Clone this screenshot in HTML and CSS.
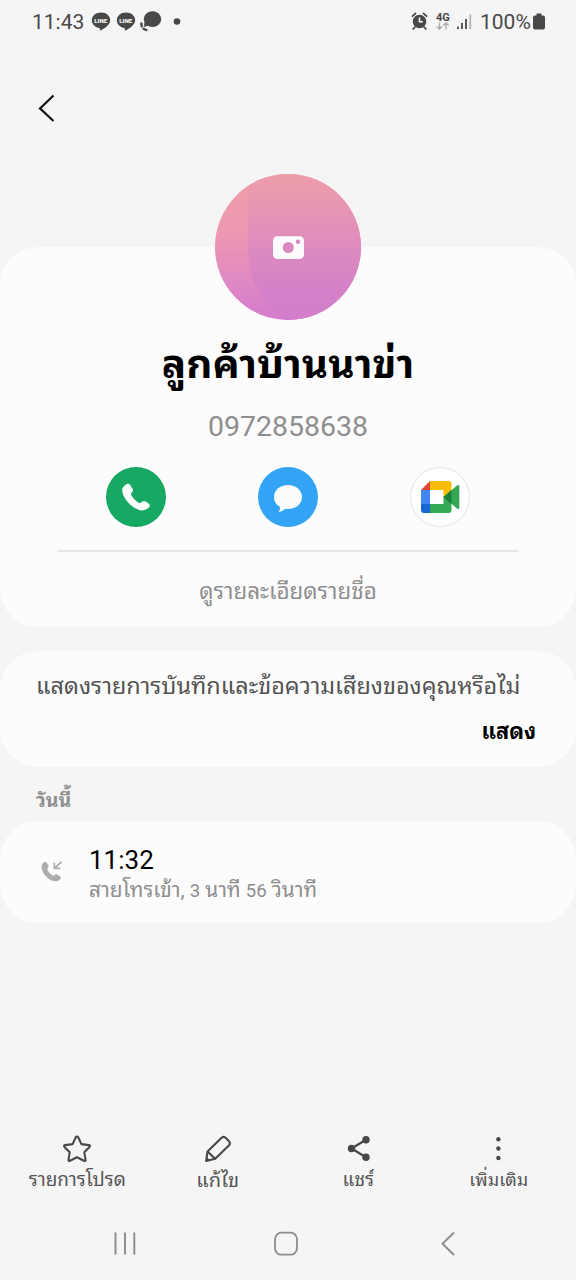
FILE: index.html
```html
<!DOCTYPE html>
<html lang="th">
<head>
<meta charset="utf-8">
<title>ลูกค้าบ้านนาข่า</title>
<link rel="stylesheet" href="styles.css">
</head>
<body>
<div class="screen">
  <header class="status">
    <span class="clock">11:43</span>
    <svg class="notices" width="94" height="26" viewBox="0 0 94 26">
      <g fill="#484848">
        <path d="M10 3.500C4.700 3.500.8 7 .8 11.300c0 3.900 3.200 7.100 7.600 7.800.8.200.4 1.600.6 2.600 3.500-1.600 10.200-5.600 10.200-10.400C19.200 7 15.300 3.500 10 3.500z"/>
        <path transform="translate(25 0)" d="M10 3.500C4.700 3.500.8 7 .8 11.300c0 3.900 3.200 7.100 7.600 7.800.8.200.4 1.600.6 2.600 3.500-1.600 10.200-5.600 10.200-10.400C19.200 7 15.300 3.500 10 3.500z"/>
        <ellipse cx="61.500" cy="10.200" rx="8.700" ry="7.900"/>
        <path d="M53.500 13l-.5 5 6-2z"/>
        <circle cx="86" cy="12.500" r="3.300"/>
      </g>
      <path d="M50.500 13.500c-1 4.500 2 7.500 7 8" fill="none" stroke="#484848" stroke-width="2.400" stroke-dasharray="5 1"/>
      <text class="line-mark" x="3.200" y="13.700">LINE</text>
      <text class="line-mark" x="28.200" y="13.700">LINE</text>
    </svg>
    <svg class="signals" width="62" height="26" viewBox="0 0 62 26">
      <g fill="none" stroke="#484848" stroke-width="1.800" stroke-linecap="round">
        <path d="M1.500 7.200l3-2.800M15.500 7.200l-3-2.800M3.700 18.300l-1.500 1.500M13.300 18.300l1.500 1.500"/>
      </g>
      <circle cx="8.500" cy="12.500" r="6.800" fill="#484848"/>
      <path d="M8.500 8.500v4.300h3.400" fill="none" stroke="#f5f5f5" stroke-width="1.600"/>
      <text class="network" x="25" y="11.500">4G</text>
      <path d="M28.500 13.500v6.500m-2.600-2.500l2.600 2.600 2.600-2.600M35 20.500V14m-2.600 2.500L35 13.900l2.600 2.600" fill="none" stroke="#aaa" stroke-width="1.300"/>
      <path d="M47 17.500V20M51 14v6M55 10v10" stroke="#484848" stroke-width="1.800"/>
      <path d="M59.300 5.500V20" stroke="#b3b3b3" stroke-width="1.800"/>
    </svg>
    <span class="charge">100%</span>
    <svg width="12" height="18" viewBox="0 0 12 18"><path d="M3.500.5h5v2H10q2 0 2 2v10q0 2-2 2H2q-2 0-2-2v-10q0-2 2-2h1.500z" fill="#484848"/></svg>
  </header>

  <nav class="top">
    <svg width="18" height="30" viewBox="0 0 18 30"><path d="M16.500 2.500L3 15.400l13.500 12.600" fill="none" stroke="#111" stroke-width="2.200"/></svg>
  </nav>

  <section class="card profile">
    <svg class="avatar" width="146" height="146" viewBox="0 0 146 146">
      <defs>
        <linearGradient id="base" x1="0" y1="0" x2="0" y2="1"><stop offset="0" stop-color="#f09ea9"/><stop offset=".4" stop-color="#ed98b2"/><stop offset="1" stop-color="#d57ccf"/></linearGradient>
        <linearGradient id="shade" x1="0" y1="0" x2="0" y2="1"><stop offset="0" stop-color="#ee9daa"/><stop offset=".45" stop-color="#e08dbc"/><stop offset=".75" stop-color="#d582c8"/><stop offset="1" stop-color="#d47dcc"/></linearGradient>
        <clipPath id="round"><circle cx="73" cy="73" r="73"/></clipPath>
      </defs>
      <g clip-path="url(#round)">
        <rect width="146" height="146" fill="url(#base)"/>
        <path d="M33 0h113v146H70C44 125 33 104 33 74z" fill="url(#shade)"/>
      </g>
      <rect x="58" y="62.300" width="31" height="22.700" rx="4.500" fill="#fdfbfd"/>
      <circle cx="73.300" cy="73.500" r="5.500" fill="#da88bf"/>
      <circle cx="83" cy="67.800" r="2.200" fill="#da88bf"/>
    </svg>
    <h1 class="name">ลูกค้าบ้านนาข่า</h1>
    <div class="phone">0972858638</div>
    <div class="actions">
      <svg width="60" height="60" viewBox="0 0 60 60">
        <circle cx="30" cy="30" r="30" fill="#17a864"/>
        <path d="M20.500 17.200c1.500-.9 3-.3 4 1.200l2 3.300c.8 1.500.4 2.800-.8 4-1 1-.8 2 .2 3.500 1.700 2.500 4 4.800 6.400 6.300 1.400.8 2.300.7 3.200-.2 1.300-1.400 2.600-1.800 4.200-.8l3 2c1.400 1 1.500 2.700.2 3.900-3 3-7 4-11 2.200C24.500 39.300 17.800 32 16.400 25.200c-.7-3.500.6-6.300 4.100-8z" fill="#fbfffc"/>
      </svg>
      <svg width="60" height="60" viewBox="0 0 60 60">
        <circle cx="30" cy="30" r="30" fill="#33a4f5"/>
        <path d="M30 18c8 0 14 5 14 12s-6 12-14 12c-1 0-2-.1-3-.3-1.600 1.700-3.500 2.800-5.600 3.300-.6 0-.7-.4-.4-.8.800-1 1.200-2.300.9-4.400C18 37.700 16 34.200 16 30c0-7 6-12 14-12z" fill="#fafcfe"/>
      </svg>
      <svg width="60" height="60" viewBox="0 0 60 60">
        <circle cx="30" cy="30" r="29.500" fill="#fff" stroke="#e3e3e8"/>
        <path d="M20 14h18.500q3 0 3 3v13l-8 .5V23H20z" fill="#fbbc04"/>
        <path d="M11 23l9-9v9z" fill="#e54335"/>
        <path d="M11 23h9v14h-9z" fill="#4285f4"/>
        <path d="M11 37h9v9h-6q-3 0-3-3z" fill="#1967d2"/>
        <path d="M20 37h13.500v-7.500h8V43q0 3-3 3H20z" fill="#34a853"/>
        <path d="M33.500 30L47 18.500q2.300-1.500 2.300.6v21.800q0 2-2.300.6z" fill="#34a853"/>
        <path d="M33.500 30l8-6.900v13.800z" fill="#188038"/>
      </svg>
    </div>
    <div class="details">ดูรายละเอียดรายชื่อ</div>
  </section>

  <section class="card prompt">
    <p class="question">แสดงรายการบันทึกและข้อความเสียงของคุณหรือไม่</p>
    <span class="show">แสดง</span>
  </section>

  <h2 class="day">วันนี้</h2>

  <section class="card call">
    <svg width="24" height="24" viewBox="0 0 24 24">
      <path d="M3.700 1.200c1-.7 2-.3 2.700.8l1.500 2.600c.5 1 .2 1.800-.6 2.600-.8.800-.6 1.400 0 2.400 1.200 2 2.800 3.600 4.700 4.700 1 .5 1.500.4 2.200-.3 1-.9 1.800-1 2.900-.3l2.400 1.500c1.200.9 1.100 2.100.2 3-2.200 2.100-5.300 2.600-8.300 1.300-4.700-2.200-9-6.700-10.100-11.600C.6 4.800 1.400 2.500 3.700 1.200z" transform="translate(.5 2)" fill="#adadad"/>
      <path d="M21.700 2.700l-7 6.300M14.300 3.800v5.600h6" fill="none" stroke="#adadad" stroke-width="1.700"/>
    </svg>
    <div class="entry">
      <div class="time">11:32</div>
      <div class="note">สายโทรเข้า, <span class="digits">3</span> นาที <span class="digits">56</span> วินาที</div>
    </div>
  </section>

  <footer class="tools">
    <div class="tool tool-favorite">
      <svg width="32" height="32" viewBox="0 0 32 32"><path d="M16 3.500q.8 0 1.200.8l3.200 6.800 7.500 1q1.800.4.600 1.800l-5.200 5.400 1.200 7.400q.1 1.700-1.500 1.100L16 24.300l-7 3.500q-1.600.6-1.500-1.100l1.200-7.400-5.200-5.400q-1.200-1.400.6-1.800l7.500-1 3.200-6.800q.4-.8 1.200-.8z" fill="none" stroke="#484848" stroke-width="2.100" stroke-linejoin="round"/></svg>
      <span>รายการโปรด</span>
    </div>
    <div class="tool tool-edit">
      <svg width="32" height="32" viewBox="0 0 32 32"><path d="M4.200 28l1.300-9.500L19.600 4.800q2-1.700 4 0l3.500 3.500q1.600 2 0 4L13.200 25.800zM5.500 18.500l7.700 7.300" fill="none" stroke="#484848" stroke-width="2.100" stroke-linejoin="round"/><path d="M4.200 28l.6-4 3.400 3.500z" fill="#484848"/></svg>
      <span>แก้ไข</span>
    </div>
    <div class="tool tool-share">
      <svg width="32" height="32" viewBox="0 0 32 32"><path d="M24 6.800L9.500 15.500 24 24.200" fill="none" stroke="#484848" stroke-width="2.200"/><g fill="#484848"><circle cx="24" cy="6.800" r="3.700"/><circle cx="9.500" cy="15.500" r="3.700"/><circle cx="24" cy="24.200" r="3.700"/></g></svg>
      <span>แชร์</span>
    </div>
    <div class="tool tool-more">
      <svg width="32" height="32" viewBox="0 0 32 32"><g fill="#484848"><circle cx="15.400" cy="6.300" r="2.200"/><circle cx="15.400" cy="15.500" r="2.200"/><circle cx="15.400" cy="25" r="2.200"/></g></svg>
      <span>เพิ่มเติม</span>
    </div>
  </footer>

  <nav class="system">
    <svg width="24" height="26" viewBox="0 0 24 26"><path d="M2.500 1.500v22M12 1.500v22M21.300 1.500v22" stroke="#8b8b8b" stroke-width="1.900"/></svg>
    <svg class="home" width="26" height="26" viewBox="0 0 26 26"><rect x="2" y="1.700" width="22" height="22" rx="6.500" fill="none" stroke="#8b8b8b" stroke-width="1.800"/></svg>
    <svg width="16" height="26" viewBox="0 0 16 26"><path d="M14 1.500L2.500 12.700 14 24" fill="none" stroke="#8b8b8b" stroke-width="1.900"/></svg>
  </nav>
</div>
</body>
</html>
```
FILE: styles.css
```css
* { box-sizing: border-box; }
body { margin: 0; background: #f5f5f5; font-family: Roboto, "Noto Sans Thai Looped", "Noto Looped Thai", Loma, Waree, Garuda, Umpush, Sarabun, "Droid Sans Thai", "Noto Sans Thai UI", "Noto Sans", sans-serif; }
svg { display: block; flex: none; overflow: visible; }
h1, h2, p { margin: 0; }
.screen { width: 576px; height: 1280px; display: flex; flex-direction: column; overflow: hidden; }
.status { height: 44px; padding: 0 31px 1px 32px; display: flex; align-items: center; color: #484848; font-size: 21px; }
.clock { width: 59px; white-space: nowrap; }
.line-mark { font: 900 6.200px Roboto, sans-serif; fill: #f5f5f5; }
.network { font: 700 11px Roboto, sans-serif; fill: #484848; }
.signals { margin-left: auto; }
.charge { width: 52px; margin: 0 1px 0 7px; white-space: nowrap; }
.top { height: 203px; padding: 49px 0 0 37px; }
.card { background: #fcfcfc; border-radius: 38px; flex: none; }
.profile { height: 380px; display: flex; flex-direction: column; align-items: center; }
.avatar { margin-top: -73px; }
.name { height: 80px; padding-top: 19px; font-size: 40.400px; line-height: 52px; font-weight: 700; white-space: nowrap; }
.phone { height: 67px; padding-top: 9px; font-size: 28.500px; line-height: 36px; color: #8e8e8e; }
.actions { width: 462px; height: 85px; padding: 0 49px 0 48.500px; display: flex; justify-content: space-between; border-bottom: 2px solid #e5e5e5; }
.details { padding-top: 23px; line-height: 32px; font-size: 22.400px; color: #8e8e8e; white-space: nowrap; }
.prompt { height: 116px; margin-top: 24px; padding: 18px 40px 0 36px; }
.question { font-size: 23.400px; line-height: 34px; color: #535353; white-space: nowrap; }
.show { display: block; margin-top: 13px; text-align: right; font-size: 21.800px; line-height: 32px; font-weight: 700; color: #000; }
.day { height: 54px; padding: 18px 0 0 36px; font-size: 19.500px; line-height: 32px; color: #8e8e8e; }
.call { height: 102px; padding: 23px 0 0 40px; display: flex; gap: 25px; }
.call > svg { margin-top: 15px; }
.time { font-size: 26px; line-height: 32px; color: #000; }
.note { font-size: 20.800px; line-height: 28px; color: #8e8e8e; white-space: nowrap; }
.digits { font-size: 18.500px; }
.tools { margin-top: auto; height: 82px; padding: 0 7px; display: grid; grid-template-columns: repeat(4, 140.500px); color: #555; font-size: 19px; }
.tool { display: flex; flex-direction: column; align-items: center; padding-top: 7px; line-height: 30px; white-space: nowrap; }
.tool-edit span { font-size: 20px; }
.tool-more span { font-size: 18px; }
.system { height: 72px; padding: 23px 120px 0 113px; display: flex; justify-content: space-between; }
.home { margin-right: 5px; }
```
